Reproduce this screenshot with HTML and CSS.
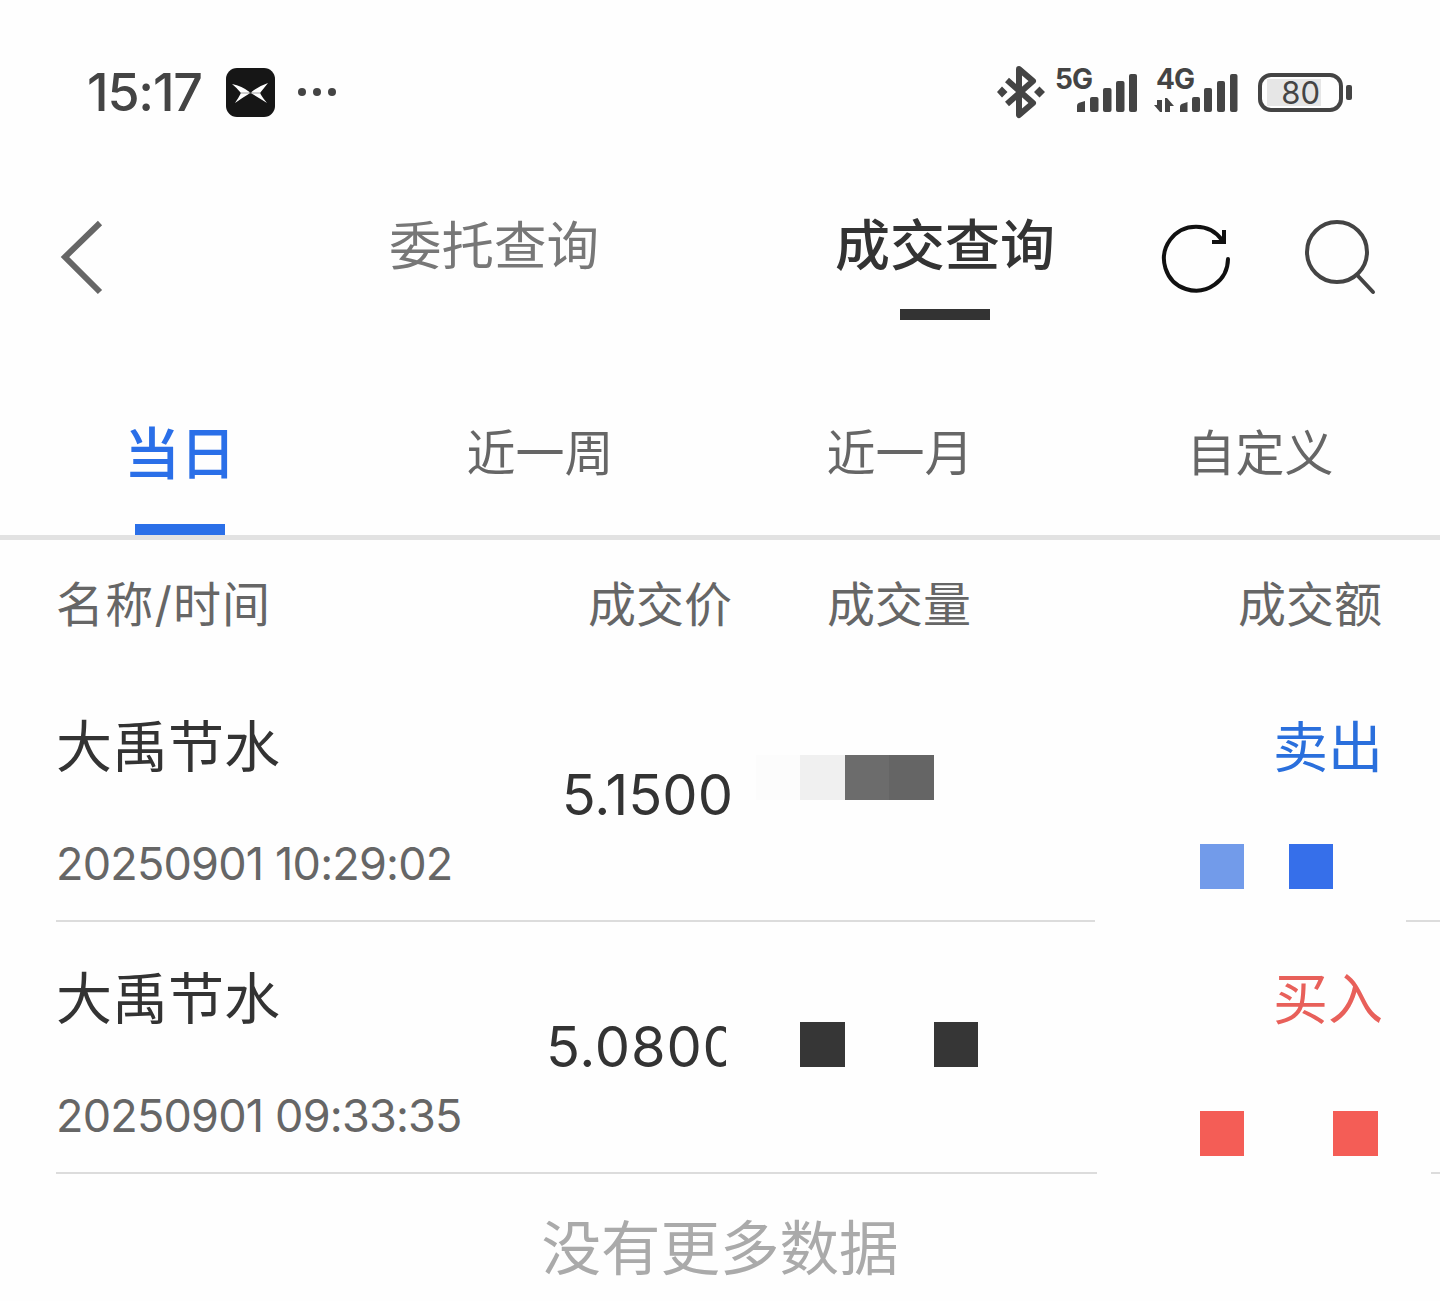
FILE: index.html
```html
<!DOCTYPE html>
<html lang="zh-CN">
<head>
    <meta charset="UTF-8">
    <meta name="viewport" content="width=device-width, initial-scale=1.0">
    <title>成交查询</title>
    <link rel="stylesheet" href="styles.css">
</head>
<body>
    <div class="page">
        <!-- Status bar -->
        <div class="status">
            <span class="clock">15:17</span>
            <svg class="app-icon" width="49" height="49" viewBox="0 0 49 49">
                <rect width="49" height="49" rx="11" fill="#161616"/>
                <path d="M6 16 Q16 18 23.5 24 L23.5 25.5 Q16 30 9 35 Q13 29 15 25 Q11 20 6 16 Z" fill="#fff"/>
                <path d="M42 15 Q33 18 25.5 24 L25.5 25.5 Q33 30 41 35 Q36 29 34 25 Q38 20 42 15 Z" fill="#fff"/>
                <path d="M14 25 H35" stroke="#888" stroke-width="0.8"/>
            </svg>
            <span class="dots"><i></i><i></i><i></i></span>
            <div class="status-right">
                <svg class="bt" width="50" height="56" viewBox="0 0 50 56">
                    <path d="M11 16 L37 39 L23 51 V5 L37 17 L11 40" fill="none" stroke="#444" stroke-width="6" stroke-linejoin="round"/>
                    <path d="M1 28 L6 22.5 L11.5 28 L6 33.5 Z M38 28 L43.5 22.5 L49 28 L43.5 33.5 Z" fill="#444"/>
                </svg>
                <div class="net net-5g">
                    <span class="net-label">5G</span>
                    <svg width="62" height="42" viewBox="0 0 62 42">
                        <path d="M1 40 V34 Q1 31 4 30.5 L9 29 V40 Z" fill="#444"/>
                        <rect x="14" y="25" width="8.5" height="15" rx="2" fill="#444"/>
                        <rect x="27" y="16" width="8.5" height="24" rx="2" fill="#444"/>
                        <rect x="40" y="9" width="8.5" height="31" rx="2" fill="#444"/>
                        <rect x="53" y="2" width="8" height="38" rx="2" fill="#444"/>
                    </svg>
                </div>
                <div class="net net-4g">
                    <span class="net-label">4G</span>
                    <svg width="86" height="42" viewBox="0 0 86 42">
                        <path d="M4 28 H9 V40 H7 L1 33 H4 Z M12 26 H14 L21 34 H17 V40 H12 Z" fill="#444"/>
                        <path d="M27 40 V35 Q27 32 30 31.5 L34.5 30 V40 Z" fill="#444"/>
                        <rect x="39" y="25" width="8" height="15" rx="2" fill="#444"/>
                        <rect x="51" y="16" width="8" height="24" rx="2" fill="#444"/>
                        <rect x="64" y="9" width="8" height="31" rx="2" fill="#444"/>
                        <rect x="77" y="2" width="7.5" height="38" rx="2" fill="#444"/>
                    </svg>
                </div>
                <div class="battery"><span class="battery-level">80</span></div>
                <i class="battery-cap"></i>
            </div>
        </div>

        <!-- Top nav -->
        <div class="nav">
            <svg class="back" width="44" height="76" viewBox="0 0 44 76">
                <path d="M40 3 L5 37 L40 72" fill="none" stroke="#666" stroke-width="6"/>
            </svg>
            <div class="nav-tab">委托查询</div>
            <div class="nav-tab nav-tab-on">成交查询</div>
            <svg class="refresh" width="72" height="72" viewBox="0 0 72 72">
                <path d="M68 37 A32 32 0 1 1 62 18" fill="none" stroke="#111" stroke-width="4" stroke-linecap="round"/>
                <path d="M52 20 H64 V8" fill="none" stroke="#111" stroke-width="4"/>
            </svg>
            <svg class="search" width="72" height="76" viewBox="0 0 72 76">
                <circle cx="33" cy="32" r="30" fill="none" stroke="#444" stroke-width="4"/>
                <path d="M54 56 L69 72" fill="none" stroke="#444" stroke-width="4" stroke-linecap="round"/>
            </svg>
        </div>

        <!-- Date filter -->
        <div class="filter">
            <div class="filter-tab filter-on">当日</div>
            <div class="filter-tab">近一周</div>
            <div class="filter-tab">近一月</div>
            <div class="filter-tab">自定义</div>
        </div>

        <!-- Table -->
        <div class="table-head cols">
            <div class="head-name">名称/时间</div>
            <div class="right">成交价</div>
            <div class="head-vol">成交量</div>
            <div class="right">成交额</div>
        </div>

        <div class="row cols">
            <div>
                <div class="name">大禹节水</div>
                <div class="time">20250901 10:29:02</div>
            </div>
            <div class="price right">5.1500</div>
            <div class="mosaic vol-a">
                <i class="c-faint"></i><i class="c-light"></i><i class="c-mid"></i><i class="c-mid2"></i>
            </div>
            <div class="amount">
                <div class="side side-sell">卖出</div>
                <div class="mosaic amt-a">
                    <i class="c-blue-l"></i><i></i><i class="c-blue"></i>
                </div>
            </div>
        </div>
        <div class="rule">
            <i class="rule-left-a"></i><i class="rule-right-a"></i>
        </div>

        <div class="row cols">
            <div>
                <div class="name">大禹节水</div>
                <div class="time">20250901 09:33:35</div>
            </div>
            <div class="price right"><span class="price-clip">5.0800</span></div>
            <div class="mosaic vol-b">
                <i></i><i class="c-dark"></i><i></i><i></i><i class="c-dark"></i>
            </div>
            <div class="amount">
                <div class="side side-buy">买入</div>
                <div class="mosaic amt-b">
                    <i class="c-red"></i><i></i><i></i><i class="c-red"></i>
                </div>
            </div>
        </div>
        <div class="rule">
            <i class="rule-left-b"></i><i class="rule-right-b"></i>
        </div>

        <div class="no-more">没有更多数据</div>
    </div>
</body>
</html>
```

FILE: styles.css
```css
html, body {
    margin: 0;
    padding: 0;
    background-color: #fefefe;
}

.page {
    width: 1440px;
    height: 1301px;
    overflow: hidden;
    font-family: "Inter", "Noto Sans CJK SC", sans-serif;
    color: #333;
}

/* Status bar */
.status {
    height: 184px;
    display: flex;
    align-items: center;
    padding-left: 87px;
    padding-right: 88px;
    box-sizing: border-box;
}

.clock {
    font-size: 52px;
    font-weight: 500;
    color: #444;
    letter-spacing: -1.2px;
    width: 139px;
}

.dots {
    display: flex;
    gap: 7px;
    margin-left: 23px;
}

.dots i {
    width: 8px;
    height: 8px;
    border-radius: 50%;
    background-color: #444;
}

.status-right {
    margin-left: auto;
    display: flex;
    align-items: center;
    color: #444;
}

.net {
    display: flex;
    align-items: flex-start;
    height: 50px;
    position: relative;
}

.net svg {
    display: block;
    margin-top: 5px;
}

.net-label {
    font-size: 28px;
    font-weight: 700;
    line-height: 30px;
    letter-spacing: -1px;
    margin-top: -3px;
}

.net-5g {
    margin-left: 9px;
    margin-right: 14px;
}

.net-5g svg {
    margin-left: -16px;
}

.net-4g .net-label {
    width: 24px;
    margin-left: 4px;
    white-space: nowrap;
}

.net-4g svg {
    margin-left: -27px;
}

.battery {
    width: 85px;
    height: 39px;
    box-sizing: border-box;
    border: 4px solid #444;
    border-radius: 13px;
    margin-left: 19px;
    padding: 2px 18px 2px 5px;
    display: flex;
}

.battery-level {
    flex: 1;
    background-color: #e6e6e6;
    padding-right: 1px;
    font-size: 31px;
    line-height: 27px;
    text-align: right;
    color: #444;
}

.battery-cap {
    width: 6px;
    height: 15px;
    margin-left: 3px;
    border-radius: 2px;
    background-color: #444;
}

/* Top nav */
.nav {
    height: 136px;
    display: flex;
    align-items: flex-start;
    padding-left: 60px;
}

.back {
    margin-top: 36px;
}

.nav-tab {
    width: 300px;
    height: 136px;
    margin-left: 240px;
    font-size: 52.5px;
    line-height: 125px;
    text-align: center;
    color: #777;
    box-sizing: border-box;
    position: relative;
}

.nav-tab-on {
    margin-left: 151px;
    font-size: 55px;
    font-weight: 500;
    line-height: 123px;
    color: #333;
}

.nav-tab-on::after {
    content: "";
    position: absolute;
    left: 105px;
    top: 125px;
    width: 90px;
    height: 11px;
    background-color: #333;
}

.refresh {
    margin-top: 38px;
    margin-left: 65px;
}

.search {
    margin-top: 36px;
    margin-left: 72px;
}

/* Date filter */
.filter {
    height: 220px;
    display: grid;
    grid-template-columns: repeat(4, 360px);
    box-sizing: border-box;
    border-bottom: 5px solid #e2e2e2;
}

.filter-tab {
    font-size: 49px;
    line-height: 60px;
    padding-top: 104px;
    text-align: center;
    color: #666;
    position: relative;
}

.filter-on {
    font-size: 56px;
    font-weight: 500;
    padding-top: 104px;
    color: #2a6fe8;
}

.filter-on::after {
    content: "";
    position: absolute;
    left: 135px;
    bottom: 0;
    width: 90px;
    height: 11px;
    background-color: #2a6fe8;
}

/* Table */
.cols {
    display: grid;
    grid-template-columns: 444px 232px 24px 344px 282px;
    padding-left: 56px;
}

.cols > :nth-child(3) {
    grid-column: 4;
}

.table-head {
    height: 130px;
    font-size: 48px;
    line-height: 60px;
    padding-top: 35px;
    box-sizing: border-box;
    color: #666;
}

.head-name {
    letter-spacing: 1.2px;
}

.head-vol {
    padding-left: 71px;
}

.right {
    text-align: right;
}

.row {
    height: 250px;
}

.name {
    margin-top: 47px;
    font-size: 56px;
    line-height: 60px;
    white-space: nowrap;
}

.time {
    margin-top: 59px;
    font-size: 45px;
    line-height: 56px;
    letter-spacing: -0.8px;
    color: #666;
    white-space: nowrap;
}

.price {
    padding-top: 90px;
    margin-right: -1px;
    font-size: 56px;
    line-height: 70px;
}

.price-clip {
    display: inline-block;
    width: 180px;
    overflow: hidden;
    text-align: left;
    vertical-align: top;
    margin-right: 7px;
    letter-spacing: 0.8px;
}

/* Pixelated cells */
.mosaic {
    display: flex;
}

.mosaic i {
    width: 44.4px;
    height: 44.6px;
}

.vol-a {
    margin-top: 85px;
}

.vol-b {
    margin-top: 100px;
}

.amt-a {
    margin-top: 67px;
    margin-left: 100px;
}

.amt-b {
    margin-top: 82px;
    margin-left: 100px;
}

.c-faint { background-color: #fcfcfc; }
.c-light { background-color: #f0f0f0; }
.c-mid { background-color: #6c6c6c; }
.c-mid2 { background-color: #656565; }
.c-dark { background-color: #363636; }
.c-blue-l { background-color: #729bea; }
.c-blue { background-color: #366fea; }
.c-red { background-color: #f45d56; }

.side {
    margin-top: 47px;
    margin-right: -1px;
    font-size: 55px;
    line-height: 60px;
    text-align: right;
}

.side-sell {
    color: #2a6fdc;
}

.side-buy {
    color: #e8605a;
}

/* Row dividers, broken where the cover patch sits */
.rule {
    display: flex;
    height: 2px;
    padding-left: 56px;
    justify-content: space-between;
}

.rule i {
    background-color: #dcdcdc;
}

.rule-left-a { width: 1039px; }
.rule-right-a { width: 34px; }
.rule-left-b { width: 1041px; }
.rule-right-b { width: 9px; }

.no-more {
    margin-top: 44px;
    font-size: 59.5px;
    line-height: 60px;
    text-align: center;
    color: #aaa;
}
```
